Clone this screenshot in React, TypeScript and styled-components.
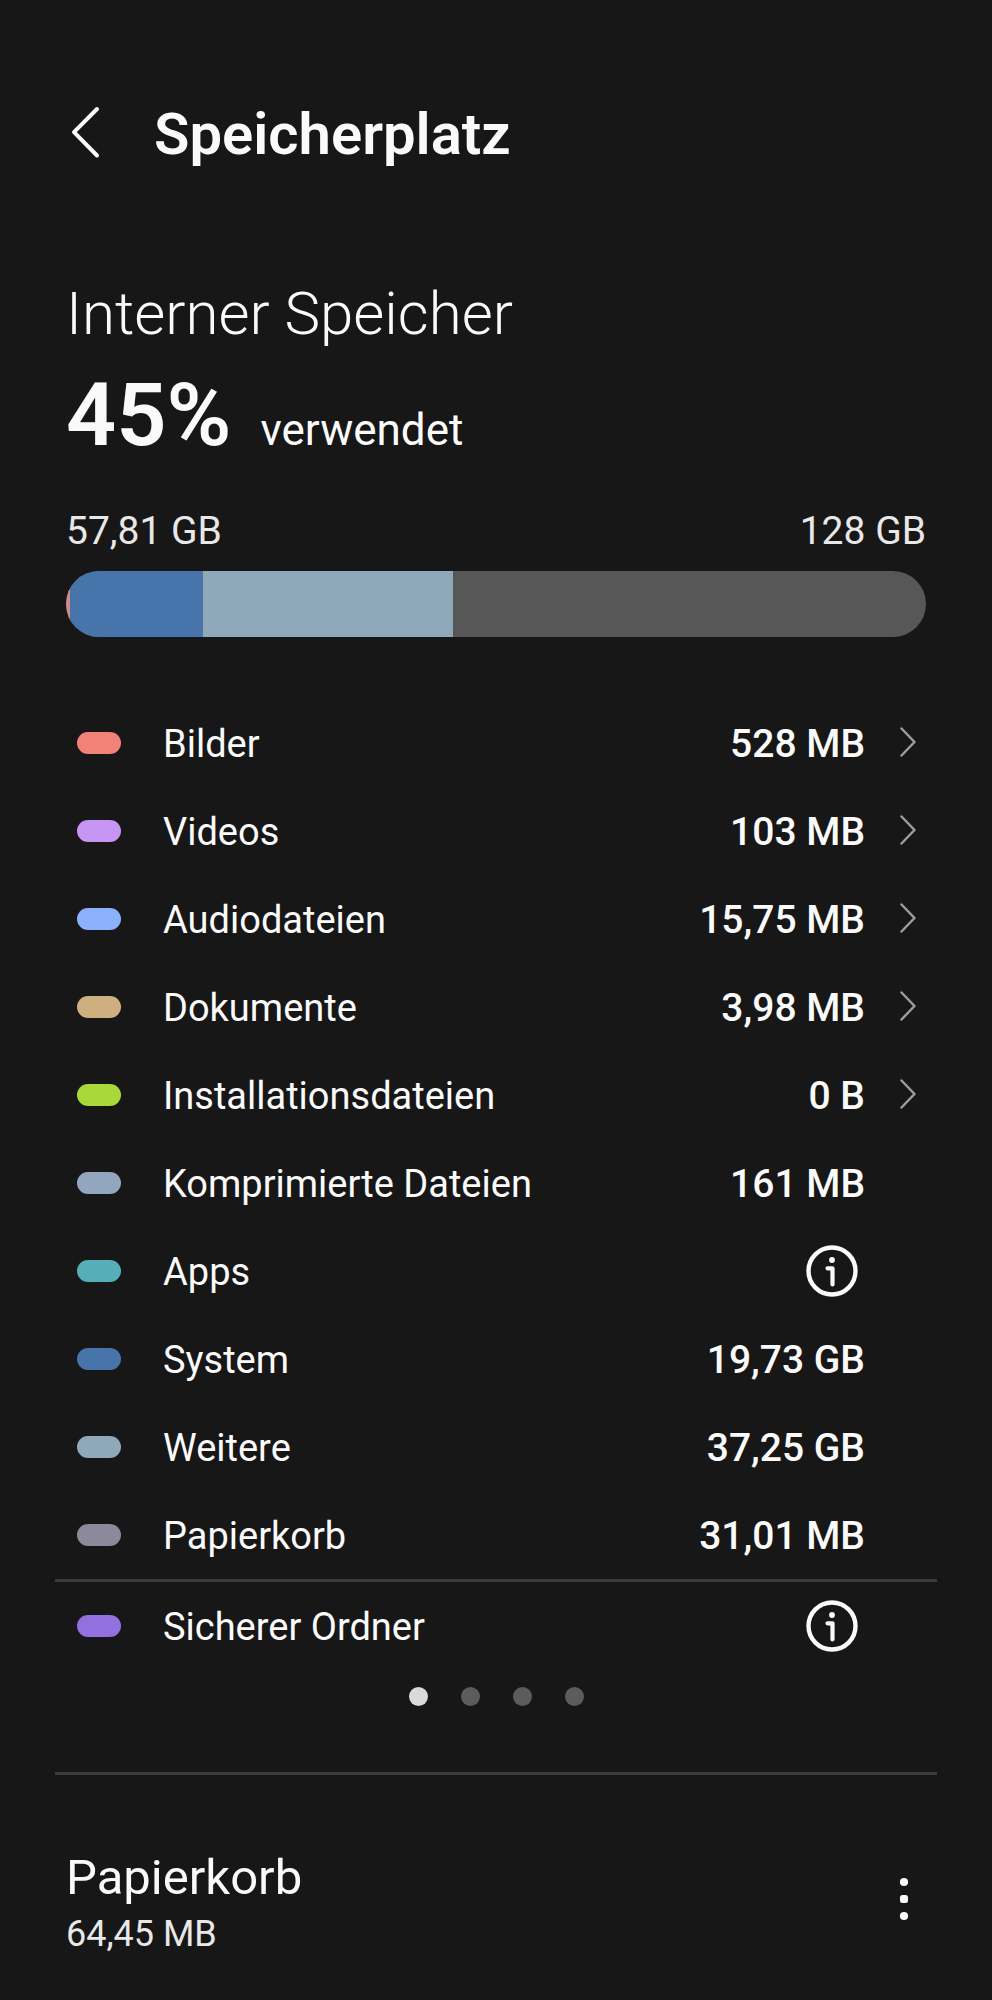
import React from "react";
import styled, { createGlobalStyle } from "styled-components";

const GlobalStyle = createGlobalStyle`
  *, *::before, *::after { box-sizing: border-box; }
  body {
    margin: 0;
    background: #171717;
    color: #fafafa;
    font-family: Roboto, "Liberation Sans", sans-serif;
  }
  h1, h2, p, ul { margin: 0; padding: 0; }
  button {
    border: 0;
    padding: 0;
    background: none;
    color: inherit;
    font: inherit;
    cursor: pointer;
  }
  svg { display: block; }
`;

const Page = styled.main`
  min-height: 100vh;
  padding: 102px 55px 40px;
`;

const Header = styled.header`
  display: flex;
  align-items: center;
  padding: 0 11px;
  margin-bottom: 112px;
`;

const BackButton = styled.button`
  width: 88px;
  height: 64px;
`;

const Title = styled.h1`
  font-size: 58px;
  line-height: 64px;
  font-weight: 600;
`;

const Summary = styled.section`
  padding: 0 11px;
  margin-bottom: 62px;
`;

const StorageName = styled.h2`
  font-size: 60px;
  line-height: 72px;
  font-weight: 300;
`;

const Usage = styled.p`
  display: flex;
  align-items: baseline;
  gap: 29px;
  margin: 13px 0 40px;
  font-size: 44px;
  line-height: 60px;
`;

const Percent = styled.strong`
  font-size: 88px;
  line-height: 104px;
  font-weight: 600;
`;

const Capacity = styled.div`
  display: flex;
  justify-content: space-between;
  margin-bottom: 16px;
  color: #e8e8e8;
  font-size: 39px;
  line-height: 48px;
`;

const Bar = styled.div`
  display: flex;
  height: 66px;
  overflow: hidden;
  border-radius: 33px;
  background: #575757;
`;

const Segment = styled.span<{ $color: string }>`
  flex: none;
  background: ${({ $color }) => $color};
`;

const List = styled.ul`
  list-style: none;
`;

const Item = styled.li<{ $divided?: boolean }>`
  border-top: ${({ $divided }) => ($divided ? "3px solid #3b3b3b" : "0")};
`;

const Row = styled.div`
  display: flex;
  align-items: center;
  width: 100%;
  height: 88px;
  padding: 0 11px;
  text-align: left;
`;

const Swatch = styled.span<{ $color: string }>`
  flex: none;
  width: 44px;
  height: 22px;
  margin: 0 42px 0 11px;
  border-radius: 11px;
  background: ${({ $color }) => $color};
`;

const Label = styled.span`
  flex: 1;
  padding-top: 2px;
  font-size: 38px;
  line-height: 48px;
`;

const Value = styled.span`
  padding-top: 2px;
  font-size: 39px;
  line-height: 48px;
  font-weight: 500;
`;

const Trailing = styled.span`
  display: flex;
  flex: none;
  justify-content: flex-end;
  width: 61px;
  padding-right: 8px;
`;

const InfoButton = styled.button`
  margin-right: 7px;
`;

const Pager = styled.nav`
  display: flex;
  justify-content: center;
  gap: 33px;
  padding: 17px 0 66px;
`;

const PageDot = styled.button<{ $active: boolean }>`
  width: 19px;
  height: 19px;
  border-radius: 50%;
  background: ${({ $active }) => ($active ? "#dadada" : "#5c5c5c")};
`;

const Trash = styled.section`
  display: flex;
  justify-content: space-between;
  align-items: flex-start;
  padding: 73px 11px 0;
  border-top: 3px solid #3b3b3b;
`;

const TrashName = styled.h2`
  font-size: 49px;
  line-height: 60px;
  font-weight: 400;
`;

const TrashSize = styled.p`
  color: #e8e8e8;
  font-size: 36px;
  line-height: 52px;
`;

const MoreButton = styled.button`
  display: flex;
  align-items: center;
  justify-content: center;
  width: 44px;
  height: 102px;
`;

const BackIcon = () => (
  <svg width="40" height="64" viewBox="0 0 40 64" fill="none" aria-hidden="true">
    <path d="M31 7 8 30.2 31 53.5" stroke="#fafafa" strokeWidth="4" strokeLinecap="round" strokeLinejoin="round" />
  </svg>
);

const ChevronIcon = () => (
  <svg width="20" height="32" viewBox="0 0 20 32" fill="none" aria-hidden="true">
    <path d="M3.5 1.5 16.5 15 3.5 28.5" stroke="#9c9c9c" strokeWidth="2.5" strokeLinecap="round" strokeLinejoin="round" />
  </svg>
);

const InfoIcon = () => (
  <svg width="52" height="52" viewBox="0 0 52 52" fill="none" aria-hidden="true">
    <circle cx="26" cy="26" r="23.5" stroke="#fafafa" strokeWidth="4.4" />
    <circle cx="26" cy="15" r="2.9" fill="#fafafa" />
    <path d="M21.5 23.3H26.5V39.5" stroke="#fafafa" strokeWidth="4.2" strokeLinecap="round" strokeLinejoin="round" />
  </svg>
);

const MoreIcon = () => (
  <svg width="10" height="44" viewBox="0 0 10 44" fill="#fafafa" aria-hidden="true">
    <circle cx="5" cy="5" r="4.1" />
    <rect x="1" y="18" width="8" height="8" rx="2.5" />
    <circle cx="5" cy="39" r="4.1" />
  </svg>
);

const totalGb = 128;

const segments = [
  { name: "media", gb: 0.6, color: "#cf8a8c" },
  { name: "system", gb: 19.73, color: "#4674ab" },
  { name: "other", gb: 37.25, color: "#8fa8ba" },
];

type Category = {
  label: string;
  color: string;
  value?: string;
  opens?: boolean;
  divided?: boolean;
};

const categories: Category[] = [
  { label: "Bilder", color: "#f28277", value: "528 MB", opens: true },
  { label: "Videos", color: "#c795f3", value: "103 MB", opens: true },
  { label: "Audiodateien", color: "#8bb1fc", value: "15,75 MB", opens: true },
  { label: "Dokumente", color: "#ceb080", value: "3,98 MB", opens: true },
  { label: "Installationsdateien", color: "#a8d938", value: "0 B", opens: true },
  { label: "Komprimierte Dateien", color: "#93a6bf", value: "161 MB" },
  { label: "Apps", color: "#56afb8" },
  { label: "System", color: "#4674ab", value: "19,73 GB" },
  { label: "Weitere", color: "#8fa8ba", value: "37,25 GB" },
  { label: "Papierkorb", color: "#8a8a9b", value: "31,01 MB" },
  { label: "Sicherer Ordner", color: "#9270e0", divided: true },
];

const CategoryItem = ({ label, color, value, opens, divided }: Category) => (
  <Item $divided={divided}>
    <Row as={opens ? "button" : "div"}>
      <Swatch $color={color} />
      <Label>{label}</Label>
      {value ? (
        <Value>{value}</Value>
      ) : (
        <InfoButton type="button" aria-label={`Info: ${label}`}>
          <InfoIcon />
        </InfoButton>
      )}
      <Trailing>{opens && <ChevronIcon />}</Trailing>
    </Row>
  </Item>
);

export default function App() {
  const [page, setPage] = React.useState(0);

  return (
    <>
      <GlobalStyle />
      <Page>
        <Header>
          <BackButton type="button" aria-label="Zurück">
            <BackIcon />
          </BackButton>
          <Title>Speicherplatz</Title>
        </Header>

        <Summary>
          <StorageName>Interner Speicher</StorageName>
          <Usage>
            <Percent>45%</Percent>
            <span>verwendet</span>
          </Usage>
          <Capacity>
            <span>57,81 GB</span>
            <span>128 GB</span>
          </Capacity>
          <Bar>
            {segments.map((s) => (
              <Segment key={s.name} $color={s.color} style={{ width: `${(s.gb / totalGb) * 100}%` }} />
            ))}
          </Bar>
        </Summary>

        <List>
          {categories.map((c) => (
            <CategoryItem key={c.label} {...c} />
          ))}
        </List>

        <Pager aria-label="Speicherorte">
          {[0, 1, 2, 3].map((i) => (
            <PageDot key={i} type="button" aria-label={`Seite ${i + 1}`} $active={i === page} onClick={() => setPage(i)} />
          ))}
        </Pager>

        <Trash>
          <div>
            <TrashName>Papierkorb</TrashName>
            <TrashSize>64,45 MB</TrashSize>
          </div>
          <MoreButton type="button" aria-label="Weitere Optionen">
            <MoreIcon />
          </MoreButton>
        </Trash>
      </Page>
    </>
  );
}
